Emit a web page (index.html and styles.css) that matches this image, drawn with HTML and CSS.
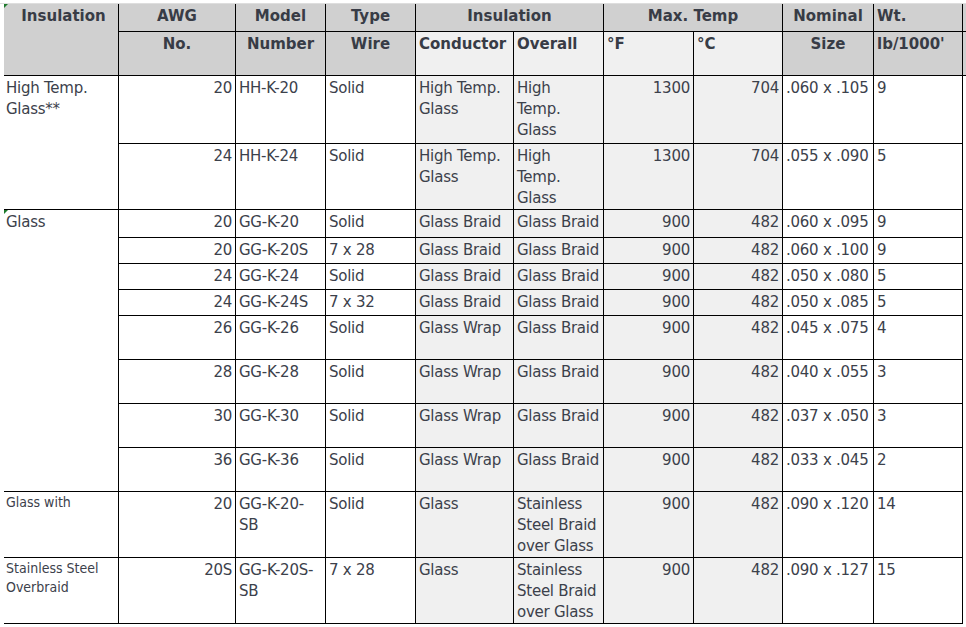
FILE: index.html
```html
<!DOCTYPE html>
<html>
<head>
<meta charset="utf-8">
<link rel="stylesheet" href="styles.css">
</head>
<body>
<div class="sheet">
<table class="grid">
  <colgroup>
    <col class="w1"><col class="w2"><col class="w3"><col class="w4"><col class="w5">
    <col class="w6"><col class="w7"><col class="w8"><col class="w9"><col class="w10"><col class="w11">
  </colgroup>
  <thead>
    <tr class="h1">
      <th class="hd first" rowspan="2"><span class="flag"></span>Insulation</th>
      <th class="hd">AWG</th>
      <th class="hd">Model</th>
      <th class="hd">Type</th>
      <th class="hd" colspan="2">Insulation</th>
      <th class="hd" colspan="2">Max. Temp</th>
      <th class="hd">Nominal</th>
      <th class="hd left">Wt.</th>
      <th class="hd pad"></th>
    </tr>
    <tr class="h2">
      <th class="hd">No.</th>
      <th class="hd">Number</th>
      <th class="hd">Wire</th>
      <th class="hd light left">Conductor</th>
      <th class="hd light left">Overall</th>
      <th class="hd light left">°F</th>
      <th class="hd light left">°C</th>
      <th class="hd">Size</th>
      <th class="hd left">lb/1000'</th>
      <th class="hd pad"></th>
    </tr>
  </thead>
  <tbody>
    <tr class="r68">
      <td class="ins" rowspan="2">High Temp.<br>Glass**</td>
      <td class="num">20</td><td>HH-K-20</td><td>Solid</td>
      <td class="sh">High Temp.<br>Glass</td><td class="sh">High<br>Temp.<br>Glass</td>
      <td class="sh num">1300</td><td class="sh num">704</td><td>.060 x .105</td><td>9</td><td class="blank"></td>
    </tr>
    <tr class="r66">
      <td class="num">24</td><td>HH-K-24</td><td>Solid</td>
      <td class="sh">High Temp.<br>Glass</td><td class="sh">High<br>Temp.<br>Glass</td>
      <td class="sh num">1300</td><td class="sh num">704</td><td>.055 x .090</td><td>5</td><td class="blank"></td>
    </tr>
    <tr class="r28">
      <td class="ins" rowspan="8"><span class="flag"></span>Glass<span class="sel"></span></td>
      <td class="num">20</td><td>GG-K-20</td><td>Solid</td>
      <td class="sh">Glass Braid</td><td class="sh">Glass Braid</td>
      <td class="sh num">900</td><td class="sh num">482</td><td>.060 x .095</td><td>9</td><td class="blank"></td>
    </tr>
    <tr class="r26">
      <td class="num">20</td><td>GG-K-20S</td><td>7 x 28</td>
      <td class="sh">Glass Braid</td><td class="sh">Glass Braid</td>
      <td class="sh num">900</td><td class="sh num">482</td><td>.060 x .100</td><td>9</td><td class="blank"></td>
    </tr>
    <tr class="r26">
      <td class="num">24</td><td>GG-K-24</td><td>Solid</td>
      <td class="sh">Glass Braid</td><td class="sh">Glass Braid</td>
      <td class="sh num">900</td><td class="sh num">482</td><td>.050 x .080</td><td>5</td><td class="blank"></td>
    </tr>
    <tr class="r26">
      <td class="num">24</td><td>GG-K-24S</td><td>7 x 32</td>
      <td class="sh">Glass Braid</td><td class="sh">Glass Braid</td>
      <td class="sh num">900</td><td class="sh num">482</td><td>.050 x .085</td><td>5</td><td class="blank"></td>
    </tr>
    <tr class="r44">
      <td class="num">26</td><td>GG-K-26</td><td>Solid</td>
      <td class="sh">Glass Wrap</td><td class="sh">Glass Braid</td>
      <td class="sh num">900</td><td class="sh num">482</td><td>.045 x .075</td><td>4</td><td class="blank"></td>
    </tr>
    <tr class="r44">
      <td class="num">28</td><td>GG-K-28</td><td>Solid</td>
      <td class="sh">Glass Wrap</td><td class="sh">Glass Braid</td>
      <td class="sh num">900</td><td class="sh num">482</td><td>.040 x .055</td><td>3</td><td class="blank"></td>
    </tr>
    <tr class="r44">
      <td class="num">30</td><td>GG-K-30</td><td>Solid</td>
      <td class="sh">Glass Wrap</td><td class="sh">Glass Braid</td>
      <td class="sh num">900</td><td class="sh num">482</td><td>.037 x .050</td><td>3</td><td class="blank"></td>
    </tr>
    <tr class="r44">
      <td class="num">36</td><td>GG-K-36</td><td>Solid</td>
      <td class="sh">Glass Wrap</td><td class="sh">Glass Braid</td>
      <td class="sh num">900</td><td class="sh num">482</td><td>.033 x .045</td><td>2</td><td class="blank"></td>
    </tr>
    <tr class="r66">
      <td class="ins small">Glass with</td>
      <td class="num">20</td><td>GG-K-20-<br>SB</td><td>Solid</td>
      <td class="sh">Glass</td><td class="sh">Stainless<br>Steel Braid<br>over Glass</td>
      <td class="sh num">900</td><td class="sh num">482</td><td>.090 x .120</td><td>14</td><td class="blank"></td>
    </tr>
    <tr class="r66">
      <td class="ins small">Stainless Steel<br>Overbraid</td>
      <td class="num">20S</td><td>GG-K-20S-<br>SB</td><td>7 x 28</td>
      <td class="sh">Glass</td><td class="sh">Stainless<br>Steel Braid<br>over Glass</td>
      <td class="sh num">900</td><td class="sh num">482</td><td>.090 x .127</td><td>15</td><td class="blank"></td>
    </tr>
  </tbody>
</table>
</div>
</body>
</html>
```

FILE: styles.css
```css
html, body {
  margin: 0;
  padding: 0;
  background: #ffffff;
}

.sheet {
  margin-top: 3px;
  border-top: 1px solid #dedede;
  padding-left: 4px;
}

.grid {
  border-collapse: separate;
  border-spacing: 0;
  table-layout: fixed;
  width: 962px;
  font-family: "DejaVu Sans", Verdana, sans-serif;
  font-size: 15px;
  color: #3c414b;
}

.w1 { width: 115px; }
.w2 { width: 117px; }
.w3 { width: 90px; }
.w4 { width: 90px; }
.w5 { width: 98px; }
.w6 { width: 90px; }
.w7 { width: 90px; }
.w8 { width: 89px; }
.w9 { width: 91px; }
.w10 { width: 89px; }
.w11 { width: 3px; }

.grid th,
.grid td {
  box-sizing: border-box;
  border-right: 1px solid #000;
  border-bottom: 1px solid #000;
  vertical-align: top;
  padding: 2px 3px 0 3px;
  line-height: 21px;
  overflow: hidden;
  white-space: nowrap;
}

.grid th {
  background: #d0d0d0;
  font-weight: bold;
  font-size: 15px;
  text-align: center;
  color: #383c46;
  padding-top: 0.5px;
  line-height: 22px;
}

.h2 th {
  padding-top: 1px;
}

.grid th.first {
  padding-left: 8px;
  position: relative;
}

.grid th.left { text-align: left; }
.grid th.light { background: #f0f0f0; }
.grid th.pad { border-right: none; padding: 0; }

.h1 { height: 28px; }
.h2 { height: 44px; }
.r68 { height: 68px; }
.r66 { height: 66px; }
.r44 { height: 44px; }
.r28 { height: 28px; }
.r26 { height: 26px; }

.grid td {
  letter-spacing: -0.25px;
  text-align: left;
}

.grid td.num { text-align: right; }
.grid td.sh { background: #f0f0f0; }
.grid td.ins { padding-left: 2px; position: relative; }
.grid td.blank { border: none; padding: 0; }

.grid td.small {
  font-family: "DejaVu Sans Condensed", "DejaVu Sans", sans-serif;
  font-stretch: condensed;
  font-size: 14px;
  line-height: 19px;
  letter-spacing: 0;
  padding-top: 0.5px;
}

.flag {
  position: absolute;
  left: 0;
  top: 0;
  width: 0;
  height: 0;
  border-top: 4px solid #1d7a2c;
  border-right: 4px solid transparent;
}

.sel {
  position: absolute;
  left: -1px;
  bottom: 0;
  width: 1px;
  height: 44px;
  background: #4a8a2a;
}
```
